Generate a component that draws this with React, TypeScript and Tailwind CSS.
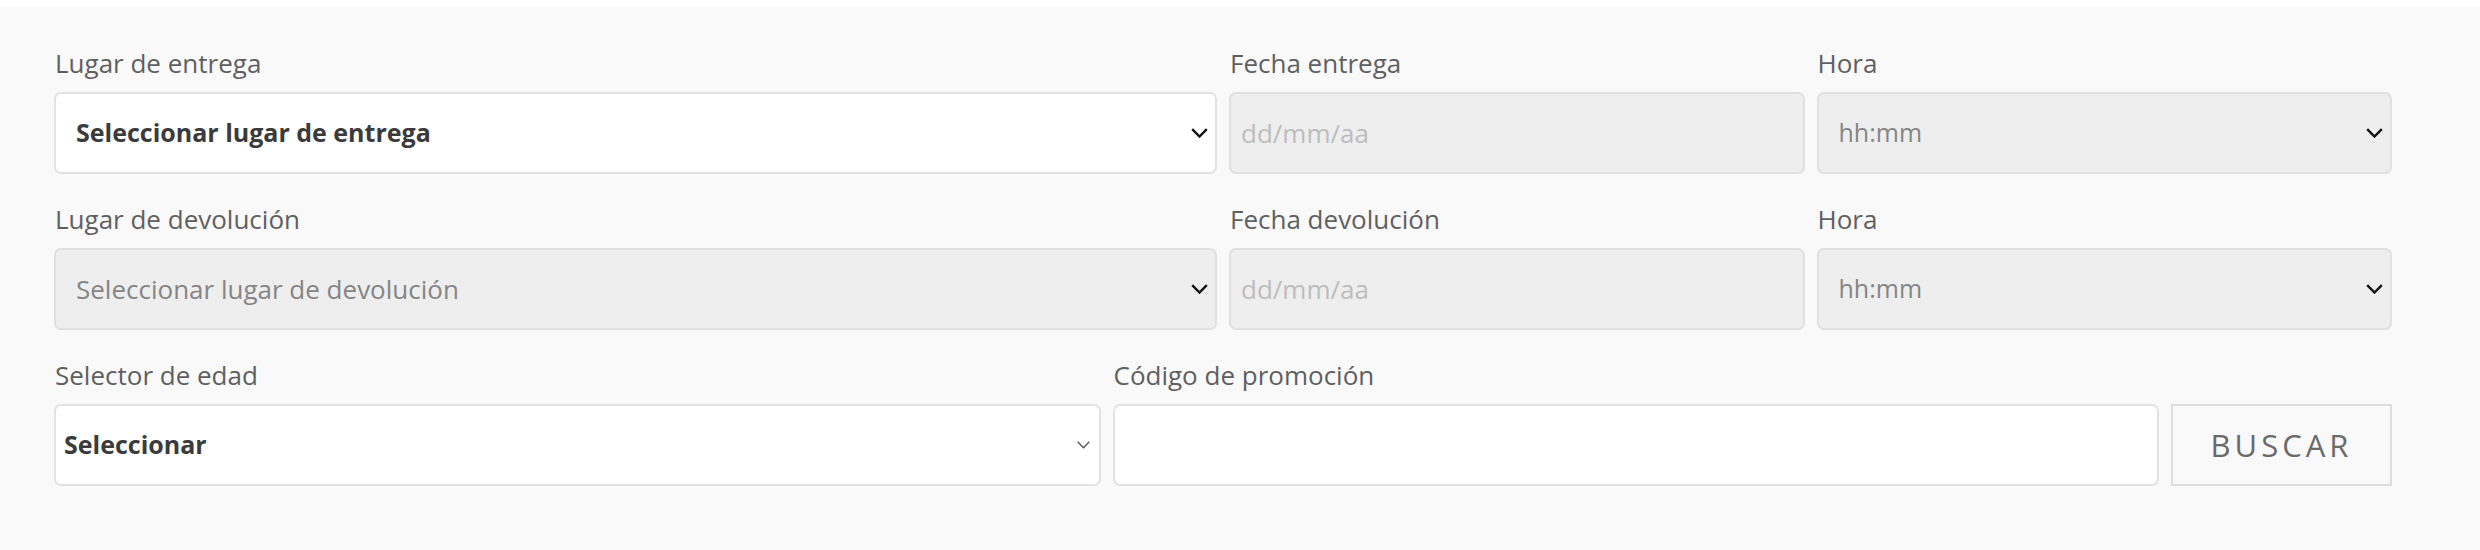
import React from 'react';

const font = { fontFamily: '"Open Sans", "Noto Sans", sans-serif' };

function Chevron({ thin = false }: { thin?: boolean }) {
  if (thin) {
    return (
      <svg width="13" height="8" viewBox="0 0 13 8" className="shrink-0">
        <polyline points="0.7,0.7 6.5,6.8 12.3,0.7" fill="none" stroke="#555" strokeWidth="1.3" />
      </svg>
    );
  }
  return (
    <svg width="17" height="10" viewBox="0 0 17 10" className="shrink-0">
      <polyline points="1.2,1.2 8.5,8.5 15.8,1.2" fill="none" stroke="#111" strokeWidth="2.4" />
    </svg>
  );
}

function Label({ children }: { children: React.ReactNode }) {
  return <div className="text-[26px] leading-[34px] mb-[12px] pl-[1px] text-[#5f5f5f]">{children}</div>;
}

export default function App() {
  return (
    <div className="w-[2480px] h-[550px] bg-white pt-[7px]" style={font}>
      <div className="h-[543px] bg-[#f9f9f9] pt-[39px]">
        <div className="ml-[54px] w-[2338px] flex flex-col gap-y-[28px]">
          {/* Entrega */}
          <div className="grid grid-cols-4 gap-x-[12px]">
            <div className="col-span-2">
              <Label>Lugar de entrega</Label>
              <div className="h-[82px] bg-white border-2 border-[#e2e2e2] rounded-[7px] flex items-center justify-between pl-[20px] pr-[7px]">
                <span className="text-[25px] font-bold text-[#3b3b3b]">Seleccionar lugar de entrega</span>
                <Chevron />
              </div>
            </div>
            <div>
              <Label>Fecha entrega</Label>
              <div className="h-[82px] bg-[#eeeeee] border-2 border-[#e0e0e0] rounded-[7px] flex items-center pl-[10px]">
                <span className="text-[26px] text-[#bdbdbd]">dd/mm/aa</span>
              </div>
            </div>
            <div>
              <Label>Hora</Label>
              <div className="h-[82px] bg-[#eeeeee] border-2 border-[#e0e0e0] rounded-[7px] flex items-center justify-between pl-[20px] pr-[7px]">
                <span className="text-[25px] text-[#858585]">hh:mm</span>
                <Chevron />
              </div>
            </div>
          </div>

          {/* Devolución */}
          <div className="grid grid-cols-4 gap-x-[12px]">
            <div className="col-span-2">
              <Label>Lugar de devolución</Label>
              <div className="h-[82px] bg-[#eeeeee] border-2 border-[#e0e0e0] rounded-[7px] flex items-center justify-between pl-[20px] pr-[7px]">
                <span className="text-[26px] text-[#858585]">Seleccionar lugar de devolución</span>
                <Chevron />
              </div>
            </div>
            <div>
              <Label>Fecha devolución</Label>
              <div className="h-[82px] bg-[#eeeeee] border-2 border-[#e0e0e0] rounded-[7px] flex items-center pl-[10px]">
                <span className="text-[26px] text-[#bdbdbd]">dd/mm/aa</span>
              </div>
            </div>
            <div>
              <Label>Hora</Label>
              <div className="h-[82px] bg-[#eeeeee] border-2 border-[#e0e0e0] rounded-[7px] flex items-center justify-between pl-[20px] pr-[7px]">
                <span className="text-[25px] text-[#858585]">hh:mm</span>
                <Chevron />
              </div>
            </div>
          </div>

          {/* Edad / promo */}
          <div className="flex gap-x-[12px] items-end">
            <div className="flex-1">
              <Label>Selector de edad</Label>
              <div className="h-[82px] bg-white border-2 border-[#e2e2e2] rounded-[7px] flex items-center justify-between pl-[8px] pr-[9px]">
                <span className="text-[25px] font-bold text-[#3b3b3b]">Seleccionar</span>
                <Chevron thin />
              </div>
            </div>
            <div className="flex-1">
              <Label>Código de promoción</Label>
              <input
                type="text"
                className="w-full h-[82px] bg-white border-2 border-[#e2e2e2] rounded-[7px] outline-none px-[10px] text-[25px]"
              />
            </div>
            <button className="w-[221px] h-[82px] border-2 border-[#dddddd] bg-[#f9f9f9] text-[31px] tracking-[4px] text-[#6a6a6a]">
              BUSCAR
            </button>
          </div>
        </div>
      </div>
    </div>
  );
}
